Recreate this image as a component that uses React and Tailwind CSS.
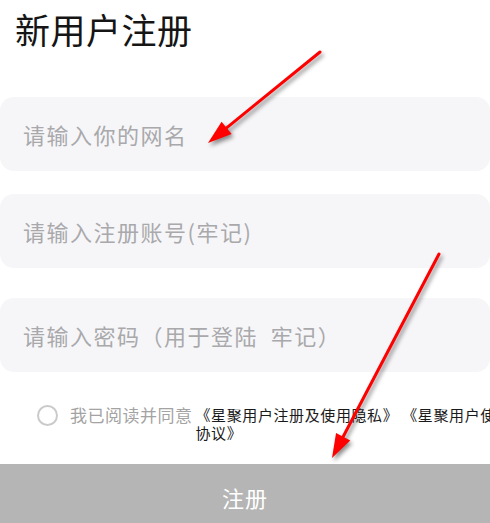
import React from "react";

const Arrow = ({ x1, y1, x2, y2 }) => {
  // arrow head computed from line direction
  const dx = x2 - x1;
  const dy = y2 - y1;
  const len = Math.hypot(dx, dy);
  const ux = dx / len;
  const uy = dy / len;
  const bx = x2 - ux * 24;
  const by = y2 - uy * 24;
  const px = -uy * 8;
  const py = ux * 8;
  return (
    <g>
      <line x1={x1} y1={y1} x2={bx + ux * 4} y2={by + uy * 4} stroke="#ff0000" strokeWidth="3" strokeLinecap="round" />
      <polygon points={`${x2},${y2} ${bx + px},${by + py} ${bx - px},${by - py}`} fill="#ff0000" />
    </g>
  );
};

const Field = ({ placeholder, className = "" }) => (
  <div className={`h-[74px] w-full rounded-[14px] bg-[#f6f6f9] flex items-center px-[23px] ${className}`}>
    <input
      placeholder={placeholder}
      className="w-full bg-transparent outline-none text-[22px] tracking-[1.5px] text-[#333] placeholder:text-[#a9a9ab]"
    />
  </div>
);

export default function App() {
  return (
    <div className="relative w-[490px] h-[523px] overflow-hidden bg-white font-['Noto_Sans_CJK_SC',sans-serif]">
      <h1 className="pl-[15px] pt-[11px] text-[35px] leading-none tracking-[0.5px] text-[#151515]">新用户注册</h1>

      <div className="mt-[51px] flex flex-col">
        <Field placeholder="请输入你的网名" />
        <Field placeholder="请输入注册账号(牢记)" className="mt-[23px]" />
        <Field placeholder="请输入密码（用于登陆  牢记）" className="mt-[30px]" />
      </div>

      <div className="mt-[32px] flex items-start">
        <div className="ml-[37px] mt-[1px] w-[21px] h-[21px] shrink-0 rounded-full border-2 border-[#cacaca]" />
        <span className="ml-[12px] shrink-0 text-[17px] leading-[22px] tracking-[0.5px] text-[#a3a3a3]">我已阅读并同意</span>
        <p className="ml-[3px] mt-[2px] w-[322px] shrink-0 text-[15px] leading-[18px] tracking-[0.6px] text-[#1a1a1a]">
          《星聚用户注册及使用隐私》 《星聚用户使用协议》
        </p>
      </div>

      <button className="mt-[22px] w-full h-[66px] bg-[#b5b5b5] text-white text-[22px] tracking-[1px] flex items-center justify-center">
        注册
      </button>

      <svg className="absolute inset-0 pointer-events-none drop-shadow-[2px_3px_2px_rgba(0,0,0,0.45)]" width="490" height="523">
        <Arrow x1={320} y1={52} x2={208} y2={143} />
        <Arrow x1={439} y1={254} x2={332} y2={458} />
      </svg>
    </div>
  );
}
